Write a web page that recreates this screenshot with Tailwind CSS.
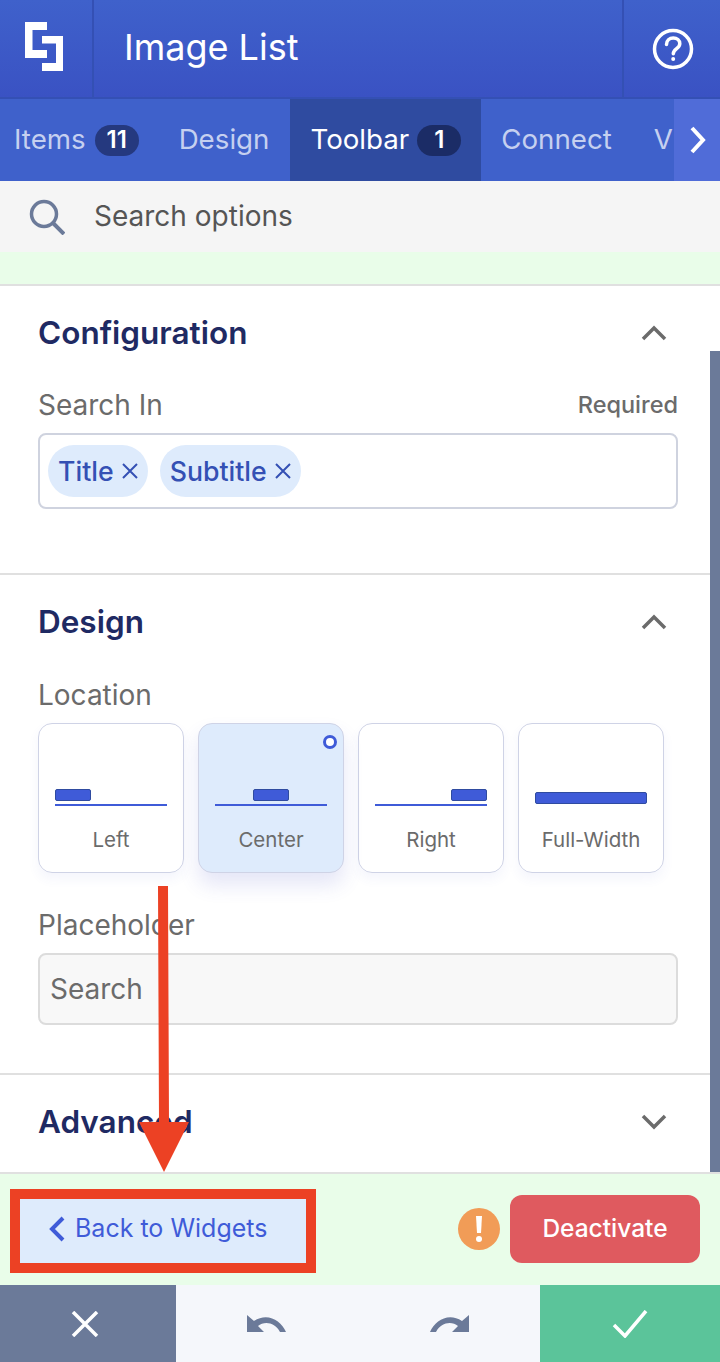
<!DOCTYPE html>
<html lang="en">
<head>
  <meta charset="UTF-8" />
  <title>Image List</title>
  <script src="https://cdn.jsdelivr.net/npm/@tailwindcss/browser@4"></script>
</head>
<body class="bg-white font-['Inter',sans-serif]">
  <div class="relative w-[720px] h-[1362px] overflow-hidden flex flex-col">

    <!-- header -->
    <header class="h-[99px] shrink-0 flex bg-gradient-to-b from-[#3f61cb] to-[#3a52c3] border-b-2 border-[#3450b4] text-white">
      <div class="w-[94px] flex items-center justify-center border-r-2 border-[#3450b4]">
        <svg width="38" height="49" viewBox="0 0 38 49" class="mr-[4px] mb-[4px]" fill="#fff">
          <path d="M0 0h22v8H7.500v20H22v8H0z"/>
          <path d="M17 14h21v35H17v-8h14V21.500H17z"/>
        </svg>
      </div>
      <div class="flex-1 flex items-center pl-[30px] pb-[3px] text-[36px]">Image List</div>
      <div class="w-[98px] flex items-center justify-center border-l-2 border-[#3450b4] pl-[1px]">
        <svg width="42" height="42" viewBox="0 0 42 42" fill="none" stroke="#fff" stroke-width="3.500">
          <circle cx="21" cy="21" r="18.500"/>
          <path d="M14.500 16.500c0-4 3-6.500 6.800-6.500 3.700 0 6.500 2.400 6.500 5.700 0 4.800-6.500 5-6.500 10" stroke-linecap="round"/>
          <circle cx="21.200" cy="31" r="2" fill="#fff" stroke="none"/>
        </svg>
      </div>
    </header>

    <!-- tabs -->
    <nav class="relative h-[82px] shrink-0 flex bg-[#3f61cb] text-[27.700px] text-[#c5d0f0] overflow-hidden">
      <div class="flex items-center pl-[14px] pr-[20px] shrink-0">Items
        <span class="ml-[9px] w-[44px] h-[31px] rounded-full bg-[#25397f] text-white text-[24px] font-semibold flex items-center justify-center">11</span>
      </div>
      <div class="flex items-center pl-[20px] pr-[21px] shrink-0">Design</div>
      <div class="flex items-center pl-[20px] pr-[20px] bg-[#2f4ba0] text-white shrink-0">Toolbar
        <span class="ml-[8px] w-[44px] h-[31px] rounded-full bg-[#1b2c66] text-white text-[24px] font-semibold flex items-center justify-center">1</span>
      </div>
      <div class="flex items-center px-[20px] shrink-0">Connect</div>
      <div class="flex items-center pl-[22px] pr-[20px] shrink-0">Visibility</div>
      <div class="absolute right-0 top-0 h-full w-[46px] bg-[#506cd8] flex items-center justify-center pl-[2px]">
        <svg width="16" height="28" viewBox="0 0 16 28" fill="none" stroke="#fff" stroke-width="4"><path d="M2 2l11 12L2 26"/></svg>
      </div>
    </nav>

    <!-- search -->
    <div class="h-[71px] shrink-0 bg-[#f5f5f5] flex items-center pl-[29px] text-[28px] text-[#555]">
      <svg width="36" height="36" viewBox="0 0 36 36" fill="none" stroke="#6b7a99" stroke-width="3.500"><circle cx="15" cy="15" r="12.500"/><path d="M24 24l11 11" stroke-width="4"/></svg>
      <span class="ml-[29px] mb-[2px]">Search options</span>
    </div>
    <div class="h-[34px] shrink-0 bg-[#e9fde9] border-b-2 border-[#e0e0e0]"></div>

    <!-- panel -->
    <main class="relative flex-1 min-h-0 overflow-hidden">
      <div class="absolute right-0 top-[65px] bottom-0 w-[10px] bg-[#6b7a99]"></div>

      <section class="h-[289px] border-b-2 border-[#e0e0e0] px-[38px] pt-[23px]">
        <div class="flex items-center justify-between pr-[15px] w-[644px]">
          <h2 class="text-[31.500px] font-semibold text-[#1f2a63]">Configuration</h2>
          <svg width="26" height="16" viewBox="0 0 26 16" fill="none" stroke="#6b6b6b" stroke-width="3.500"><path d="M2 14L13 3l11 11"/></svg>
        </div>
        <div class="mt-[31px] w-[640px] flex items-end justify-between">
          <span class="text-[28px] text-[#6b6b6b] leading-[36px]">Search In</span>
          <span class="text-[23.500px] font-medium text-[#6b6b6b] leading-[36px]">Required</span>
        </div>
        <div class="mt-[10px] w-[640px] h-[76px] rounded-lg border-2 border-[#cfd3df] flex items-center gap-[12px] pl-[8px]">
          <span class="h-[52px] pl-[10px] pr-[10px] rounded-full bg-[#deebfc] text-[#3450b4] text-[26.700px] font-medium flex items-center gap-[8px]">Title
            <svg width="16" height="16" viewBox="0 0 16 16" stroke="#3450b4" stroke-width="2"><path d="M1 1l14 14M15 1L1 15"/></svg></span>
          <span class="h-[52px] pl-[10px] pr-[10px] rounded-full bg-[#deebfc] text-[#3450b4] text-[26.700px] font-medium flex items-center gap-[8px]">Subtitle
            <svg width="16" height="16" viewBox="0 0 16 16" stroke="#3450b4" stroke-width="2"><path d="M1 1l14 14M15 1L1 15"/></svg></span>
        </div>
      </section>

      <section class="h-[500px] border-b-2 border-[#e0e0e0] px-[38px] pt-[23px]">
        <div class="flex items-center justify-between pr-[15px] w-[644px]">
          <h2 class="text-[31.500px] font-semibold text-[#1f2a63]">Design</h2>
          <svg width="26" height="16" viewBox="0 0 26 16" fill="none" stroke="#6b6b6b" stroke-width="3.500"><path d="M2 14L13 3l11 11"/></svg>
        </div>
        <div class="mt-[32px] text-[28px] text-[#6b6b6b] leading-[36px]">Location</div>
        <div class="mt-[10px] flex gap-[14px] text-[20.500px] leading-[24px] text-[#6b6b6b]">
          <div class="w-[146px] h-[150px] rounded-[14px] border border-[#cfd3e6] shadow-[0_6px_12px_rgba(70,80,200,0.06)] flex flex-col items-center">
            <div class="w-[112px] mt-[65px] h-[15px] flex"><div class="w-[36px] h-[12px] rounded-[2px] bg-[#3f5bd8] border border-[#2f4ba0]"></div></div>
            <div class="w-[112px] h-[2px] bg-[#3f5bd8]"></div>
            <div class="mt-[22px]">Left</div>
          </div>
          <div class="relative w-[146px] h-[150px] rounded-[14px] border border-[#cfd3e6] bg-[#deebfc] shadow-[0_12px_20px_rgba(70,80,200,0.14)] flex flex-col items-center">
            <div class="absolute right-[6px] top-[11px] w-[14px] h-[14px] rounded-full border-[3px] border-[#3f5bd8] bg-white"></div>
            <div class="w-[112px] mt-[65px] h-[15px] flex justify-center"><div class="w-[36px] h-[12px] rounded-[2px] bg-[#3f5bd8] border border-[#2f4ba0]"></div></div>
            <div class="w-[112px] h-[2px] bg-[#3f5bd8]"></div>
            <div class="mt-[22px]">Center</div>
          </div>
          <div class="w-[146px] h-[150px] rounded-[14px] border border-[#cfd3e6] shadow-[0_6px_12px_rgba(70,80,200,0.06)] flex flex-col items-center">
            <div class="w-[112px] mt-[65px] h-[15px] flex justify-end"><div class="w-[36px] h-[12px] rounded-[2px] bg-[#3f5bd8] border border-[#2f4ba0]"></div></div>
            <div class="w-[112px] h-[2px] bg-[#3f5bd8]"></div>
            <div class="mt-[22px]">Right</div>
          </div>
          <div class="w-[146px] h-[150px] rounded-[14px] border border-[#cfd3e6] shadow-[0_6px_12px_rgba(70,80,200,0.06)] flex flex-col items-center">
            <div class="w-[112px] h-[12px] mt-[68px] mb-[2px] rounded-[2px] bg-[#3f5bd8] border border-[#2f4ba0]"></div>
            <div class="mt-[22px]">Full-Width</div>
          </div>
        </div>
        <div class="mt-[34px] text-[28px] text-[#6b6b6b] leading-[36px]">Placeholder</div>
        <div class="mt-[10px] w-[640px] h-[72px] rounded-lg border-2 border-[#dcdcdc] bg-[#f8f8f8] flex items-center pl-[10px] text-[28px] text-[#6b6b6b]">Search</div>
      </section>

      <section class="px-[38px] pt-[23px]">
        <div class="flex items-center justify-between pr-[15px] w-[644px]">
          <h2 class="text-[31.500px] font-semibold text-[#1f2a63]">Advanced</h2>
          <svg width="26" height="16" viewBox="0 0 26 16" fill="none" stroke="#6b6b6b" stroke-width="3.500"><path d="M2 2l11 11L24 2"/></svg>
        </div>
      </section>
    </main>

    <!-- footer -->
    <div class="h-[113px] shrink-0 bg-[#e9fde9] border-t-2 border-[#e0e0e0] flex items-center justify-between pl-[20px] pr-[20px]">
      <div class="w-[286px] h-[70px] mt-[-2px] bg-[#deebfc] flex items-center pl-[29px] text-[25px] text-[#3f5bd8]">
        <svg width="16" height="26" viewBox="0 0 16 26" fill="none" stroke="#3f5bd8" stroke-width="4" class="mr-[10px]"><path d="M14 2L3 13l11 11"/></svg>
        Back to Widgets
      </div>
      <div class="flex items-center gap-[10px] mt-[-2px]">
        <div class="w-[42px] h-[42px] rounded-full bg-[#f19c57] text-white flex items-center justify-center">
          <svg width="8" height="28" viewBox="0 0 8 28" fill="#fff"><path d="M1 1h6l-1 17H2z"/><circle cx="4" cy="24" r="3"/></svg>
        </div>
        <button class="w-[190px] h-[68px] rounded-xl bg-[#df5a5f] text-white text-[24.500px] font-medium">Deactivate</button>
      </div>
    </div>

    <!-- action bar -->
    <div class="h-[77px] shrink-0 flex bg-[#f5f7fb]">
      <div class="w-[176px] bg-[#6b7a99] flex items-center justify-center pr-[6px]">
        <svg width="28" height="26" viewBox="0 0 28 26" stroke="#fff" stroke-width="3.500"><path d="M2 1l24 24M26 1L2 25"/></svg>
      </div>
      <div class="flex-1 flex items-center justify-center">
        <svg width="40" height="17" viewBox="0 0 40 17" fill="#6b7a99"><path d="M0 0v17h17l-6-6c6-5 17-4 22 6h6C34 5 20-3 7 6z"/></svg>
      </div>
      <div class="flex-1 flex items-center justify-center">
        <svg width="40" height="17" viewBox="0 0 40 17" fill="#6b7a99"><path d="M40 0v17H23l6-6c-6-5-17-4-22 6H1C6 5 20-3 33 6z"/></svg>
      </div>
      <div class="w-[180px] bg-[#5bc49a] flex items-center justify-center">
        <svg width="36" height="28" viewBox="0 0 36 28" fill="none" stroke="#fff" stroke-width="3.500"><path d="M2 15l11 11L34 1"/></svg>
      </div>
    </div>

    <!-- annotation: red arrow and highlight -->
    <div class="absolute left-[10px] top-[1189px] w-[306px] h-[84px] border-[10px] border-[#ec4124]"></div>
    <svg class="absolute left-[130px] top-[885px]" width="70" height="290" viewBox="0 0 70 290" fill="#ec4124">
      <path d="M28 1h10l1 236h20l-25 50L9 237h20z"/>
    </svg>
  </div>
</body>
</html>
